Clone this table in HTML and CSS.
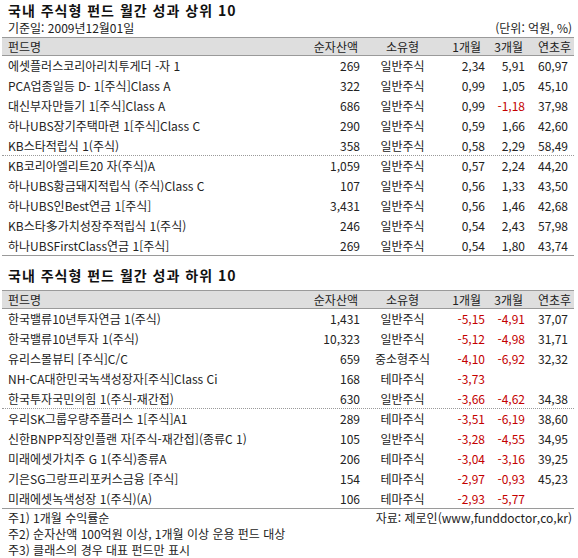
FILE: index.html
```html
<!DOCTYPE html>
<html lang="ko">
<head>
<meta charset="utf-8">
<title>국내 주식형 펀드 월간 성과</title>
<link rel="stylesheet" href="styles.css">
</head>
<body>
<div class="page">
  <h1 class="title">국내 주식형 펀드 월간 성과 상위 10</h1>
  <div class="meta">
    <span>기준일: 2009년12월01일</span>
    <span>(단위: 억원, %)</span>
  </div>
  <div class="table">
    <div class="row head">
      <span class="c-name">펀드명</span>
      <span class="c-net h-net">순자산액</span>
      <span class="c-type">소유형</span>
      <span class="c-m1 h-m1">1개월</span>
      <span class="c-m3 h-m3">3개월</span>
      <span class="c-ytd h-ytd">연초후</span>
    </div>
    <div class="row"><span class="c-name">에셋플러스코리아리치투게더 -자 1</span><span class="c-net">269</span><span class="c-type">일반주식</span><span class="c-m1">2,34</span><span class="c-m3">5,91</span><span class="c-ytd">60,97</span></div>
    <div class="row"><span class="c-name">PCA업종일등 D- 1[주식]Class A</span><span class="c-net">322</span><span class="c-type">일반주식</span><span class="c-m1">0,99</span><span class="c-m3">1,05</span><span class="c-ytd">45,10</span></div>
    <div class="row"><span class="c-name">대신부자만들기 1[주식]Class A</span><span class="c-net">686</span><span class="c-type">일반주식</span><span class="c-m1">0,99</span><span class="c-m3 neg">-1,18</span><span class="c-ytd">37,98</span></div>
    <div class="row"><span class="c-name">하나UBS장기주택마련 1[주식]Class C</span><span class="c-net">290</span><span class="c-type">일반주식</span><span class="c-m1">0,59</span><span class="c-m3">1,66</span><span class="c-ytd">42,60</span></div>
    <div class="row dotted"><span class="c-name">KB스타적립식 1(주식)</span><span class="c-net">358</span><span class="c-type">일반주식</span><span class="c-m1">0,58</span><span class="c-m3">2,29</span><span class="c-ytd">58,49</span></div>
    <div class="row"><span class="c-name">KB코리아엘리트20 자(주식)A</span><span class="c-net">1,059</span><span class="c-type">일반주식</span><span class="c-m1">0,57</span><span class="c-m3">2,24</span><span class="c-ytd">44,20</span></div>
    <div class="row"><span class="c-name">하나UBS황금돼지적립식 (주식)Class C</span><span class="c-net">107</span><span class="c-type">일반주식</span><span class="c-m1">0,56</span><span class="c-m3">1,33</span><span class="c-ytd">43,50</span></div>
    <div class="row"><span class="c-name">하나UBS인Best연금 1[주식]</span><span class="c-net">3,431</span><span class="c-type">일반주식</span><span class="c-m1">0,56</span><span class="c-m3">1,46</span><span class="c-ytd">42,68</span></div>
    <div class="row"><span class="c-name">KB스타多가치성장주적립식 1(주식)</span><span class="c-net">246</span><span class="c-type">일반주식</span><span class="c-m1">0,54</span><span class="c-m3">2,43</span><span class="c-ytd">57,98</span></div>
    <div class="row last"><span class="c-name">하나UBSFirstClass연금 1[주식]</span><span class="c-net">269</span><span class="c-type">일반주식</span><span class="c-m1">0,54</span><span class="c-m3">1,80</span><span class="c-ytd">43,74</span></div>
  </div>

  <h1 class="title title2">국내 주식형 펀드 월간 성과 하위 10</h1>
  <div class="table">
    <div class="row head">
      <span class="c-name">펀드명</span>
      <span class="c-net h-net">순자산액</span>
      <span class="c-type">소유형</span>
      <span class="c-m1 h-m1">1개월</span>
      <span class="c-m3 h-m3">3개월</span>
      <span class="c-ytd h-ytd">연초후</span>
    </div>
    <div class="row"><span class="c-name">한국밸류10년투자연금 1(주식)</span><span class="c-net">1,431</span><span class="c-type">일반주식</span><span class="c-m1 neg">-5,15</span><span class="c-m3 neg">-4,91</span><span class="c-ytd">37,07</span></div>
    <div class="row"><span class="c-name">한국밸류10년투자 1(주식)</span><span class="c-net">10,323</span><span class="c-type">일반주식</span><span class="c-m1 neg">-5,12</span><span class="c-m3 neg">-4,98</span><span class="c-ytd">31,71</span></div>
    <div class="row"><span class="c-name">유리스몰뷰티 [주식]C/C</span><span class="c-net">659</span><span class="c-type">중소형주식</span><span class="c-m1 neg">-4,10</span><span class="c-m3 neg">-6,92</span><span class="c-ytd">32,32</span></div>
    <div class="row"><span class="c-name">NH-CA대한민국녹색성장자[주식]Class Ci</span><span class="c-net">168</span><span class="c-type">테마주식</span><span class="c-m1 neg">-3,73</span><span class="c-m3"></span><span class="c-ytd"></span></div>
    <div class="row dotted"><span class="c-name">한국투자국민의힘 1(주식-재간접)</span><span class="c-net">630</span><span class="c-type">일반주식</span><span class="c-m1 neg">-3,66</span><span class="c-m3 neg">-4,62</span><span class="c-ytd">34,38</span></div>
    <div class="row"><span class="c-name">우리SK그룹우량주플러스 1[주식]A1</span><span class="c-net">289</span><span class="c-type">테마주식</span><span class="c-m1 neg">-3,51</span><span class="c-m3 neg">-6,19</span><span class="c-ytd">38,60</span></div>
    <div class="row"><span class="c-name">신한BNPP직장인플랜 자[주식-재간접](종류C 1)</span><span class="c-net">105</span><span class="c-type">일반주식</span><span class="c-m1 neg">-3,28</span><span class="c-m3 neg">-4,55</span><span class="c-ytd">34,95</span></div>
    <div class="row"><span class="c-name">미래에셋가치주 G 1(주식)종류A</span><span class="c-net">206</span><span class="c-type">테마주식</span><span class="c-m1 neg">-3,04</span><span class="c-m3 neg">-3,16</span><span class="c-ytd">39,25</span></div>
    <div class="row"><span class="c-name">기은SG그랑프리포커스금융 [주식]</span><span class="c-net">154</span><span class="c-type">테마주식</span><span class="c-m1 neg">-2,97</span><span class="c-m3 neg">-0,93</span><span class="c-ytd">45,23</span></div>
    <div class="row last"><span class="c-name">미래에셋녹색성장 1(주식)(A)</span><span class="c-net">106</span><span class="c-type">테마주식</span><span class="c-m1 neg">-2,93</span><span class="c-m3 neg">-5,77</span><span class="c-ytd"></span></div>
  </div>

  <div class="footer">
    <div class="notes">
      <p>주1) 1개월 수익률순</p>
      <p>주2) 순자산액 100억원 이상, 1개월 이상 운용 펀드 대상</p>
      <p>주3) 클래스의 경우 대표 펀드만 표시</p>
    </div>
    <div class="source">자료: 제로인(www,funddoctor,co,kr)</div>
  </div>
</div>
</body>
</html>
```

FILE: styles.css
```css
* { box-sizing: border-box; }

html, body {
  margin: 0;
  padding: 0;
  background: #ffffff;
}

body {
  font-family: "Noto Sans CJK KR", "Noto Sans", sans-serif;
  font-size: 12px;
  color: #222222;
}

.page {
  width: 578px;
}

.title {
  margin: 0;
  padding-left: 8px;
  font-size: 14px;
  font-weight: bold;
  letter-spacing: 1px;
  line-height: 20px;
  height: 20px;
  color: #111111;
}

.title2 {
  height: 34px;
  padding-top: 9px;
  line-height: 20px;
}

.meta {
  display: flex;
  justify-content: space-between;
  height: 16px;
  line-height: 16px;
  padding: 0 6px 0 8px;
  margin-bottom: 1px;
}

.table {
  margin: 0 4px 0 2px;
  width: 572px;
}

.row {
  display: grid;
  grid-template-columns: 308px 55px 75px 50px 40px 44px;
  align-items: center;
  height: 20px;
  line-height: 16px;
  white-space: nowrap;
}

.row.head {
  height: 19px;
  background: #dedede;
  border-top: 1px solid #9a9a9a;
  border-bottom: 1px solid #9a9a9a;
}

.row.dotted {
  border-bottom: 1px dotted #9a9a9a;
}

.row.last {
  border-bottom: 1px solid #9a9a9a;
}

.c-name {
  padding-left: 6px;
}

.c-net,
.c-m1,
.c-m3,
.c-ytd {
  text-align: right;
  padding-right: 5px;
}

.c-ytd {
  padding-right: 6px;
}

.c-type {
  text-align: center;
}

.h-net { padding-right: 7px; }
.h-m1 { padding-right: 9px; }
.h-m3 { padding-right: 7px; }
.h-ytd { padding-right: 3px; }

.neg {
  color: #c40000;
}

.footer {
  display: flex;
  justify-content: space-between;
  align-items: flex-start;
  padding: 1px 6px 0 8px;
}

.notes p {
  margin: 0;
  line-height: 16px;
}

.source {
  line-height: 16px;
}
```
